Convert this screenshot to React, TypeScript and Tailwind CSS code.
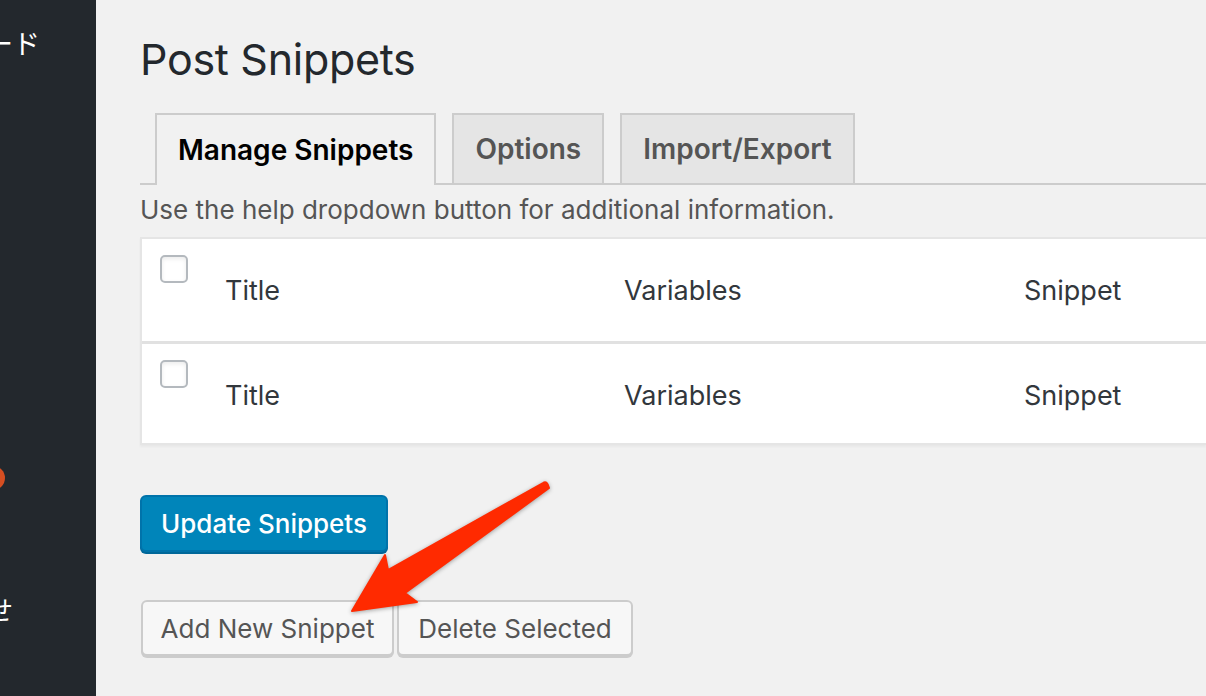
import React from "react";

const font = { fontFamily: "Inter, 'Noto Sans CJK JP', sans-serif" };

function Checkbox() {
  return (
    <div className="w-[28px] h-[28px] rounded-[5px] border-2 border-[#b4b9be] bg-white shadow-[inset_0_2px_4px_rgba(0,0,0,0.08)]" />
  );
}

function Row({ top }: { top?: boolean }) {
  return (
    <div className={`flex h-[102px] bg-white ${top ? "" : "border-t-[3px] border-[#e1e1e1]"}`}>
      <div className="w-[83px] pl-[18px] pt-[16px]">
        <Checkbox />
      </div>
      <div className="w-[399px] pt-[32px] text-[27px] text-[#32373c]">Title</div>
      <div className="w-[400px] pt-[32px] text-[27px] text-[#32373c]">Variables</div>
      <div className="flex-1 pt-[32px] text-[27px] text-[#32373c]">Snippet</div>
    </div>
  );
}

export default function App() {
  return (
    <div className="w-[1206px] h-[696px] overflow-hidden flex bg-[#f1f1f1]" style={font}>
      <div className="w-[96px] shrink-0 bg-[#23282d] relative text-white">
        <div className="absolute left-[-14px] top-[31px] text-[27px] leading-none whitespace-nowrap">ード</div>
        <div className="absolute left-[-19px] top-[466px] w-[24px] h-[24px] rounded-full bg-[#d54e21]" />
        <div className="absolute left-[-13px] top-[598px] text-[26px] leading-none">せ</div>
      </div>
      <div className="flex-1 relative pl-[44px]">
        <h1 className="mt-[33px] text-[43px] leading-[52px] text-[#23282d] tracking-[-0.3px]">Post Snippets</h1>
        <div className="mt-[28px] flex items-end border-b-2 border-[#cccccc] pl-[15px] gap-[16px] h-[72px]">
          <div className="h-[72px] px-[21px] flex items-center border-2 border-b-0 border-[#cccccc] bg-[#f1f1f1] -mb-[2px] text-[28px] font-semibold text-black">
            Manage Snippets
          </div>
          <div className="h-[70px] px-[21px] flex items-center border-2 border-b-0 border-[#cccccc] bg-[#e5e5e5] text-[28px] font-semibold text-[#555]">
            Options
          </div>
          <div className="h-[70px] px-[21px] flex items-center border-2 border-b-0 border-[#cccccc] bg-[#e5e5e5] text-[28px] font-semibold text-[#555]">
            Import/Export
          </div>
        </div>
        <p className="mt-[8px] text-[26px] leading-[34px] text-[#555]">Use the help dropdown button for additional information.</p>
        <div className="mt-[10px] border-2 border-r-0 border-[#e5e5e5] shadow-[0_2px_2px_rgba(0,0,0,0.04)]">
          <Row top />
          <Row />
        </div>
        <button className="mt-[50px] h-[57px] w-[248px] rounded-[6px] bg-[#0085ba] border-2 border-[#0073aa] shadow-[0_2px_0_#006799] text-white text-[26px] font-medium block">
          Update Snippets
        </button>
        <div className="mt-[48px] flex gap-[3px] pl-[1px]">
          <button className="h-[56px] w-[253px] rounded-[6px] bg-[#f7f7f7] border-2 border-[#cccccc] shadow-[0_2px_0_#cccccc] text-[26px] text-[#555]">
            Add New Snippet
          </button>
          <button className="h-[56px] w-[236px] rounded-[6px] bg-[#f7f7f7] border-2 border-[#cccccc] shadow-[0_2px_0_#cccccc] text-[26px] text-[#555]">
            Delete Selected
          </button>
        </div>
        <svg className="absolute left-0 top-0 pointer-events-none" width="1110" height="696" style={{ filter: "drop-shadow(0 1px 2px rgba(0,0,0,0.35))" }}>
          <path
            fill="#ff2a00"
            stroke="#ff2a00"
            strokeWidth="2"
            strokeLinejoin="round"
            d="M447,483 Q451,480 453,488 L309,593 L321,602 L256,611 L289,555 L292,570 Z"
          />
        </svg>
      </div>
    </div>
  );
}
